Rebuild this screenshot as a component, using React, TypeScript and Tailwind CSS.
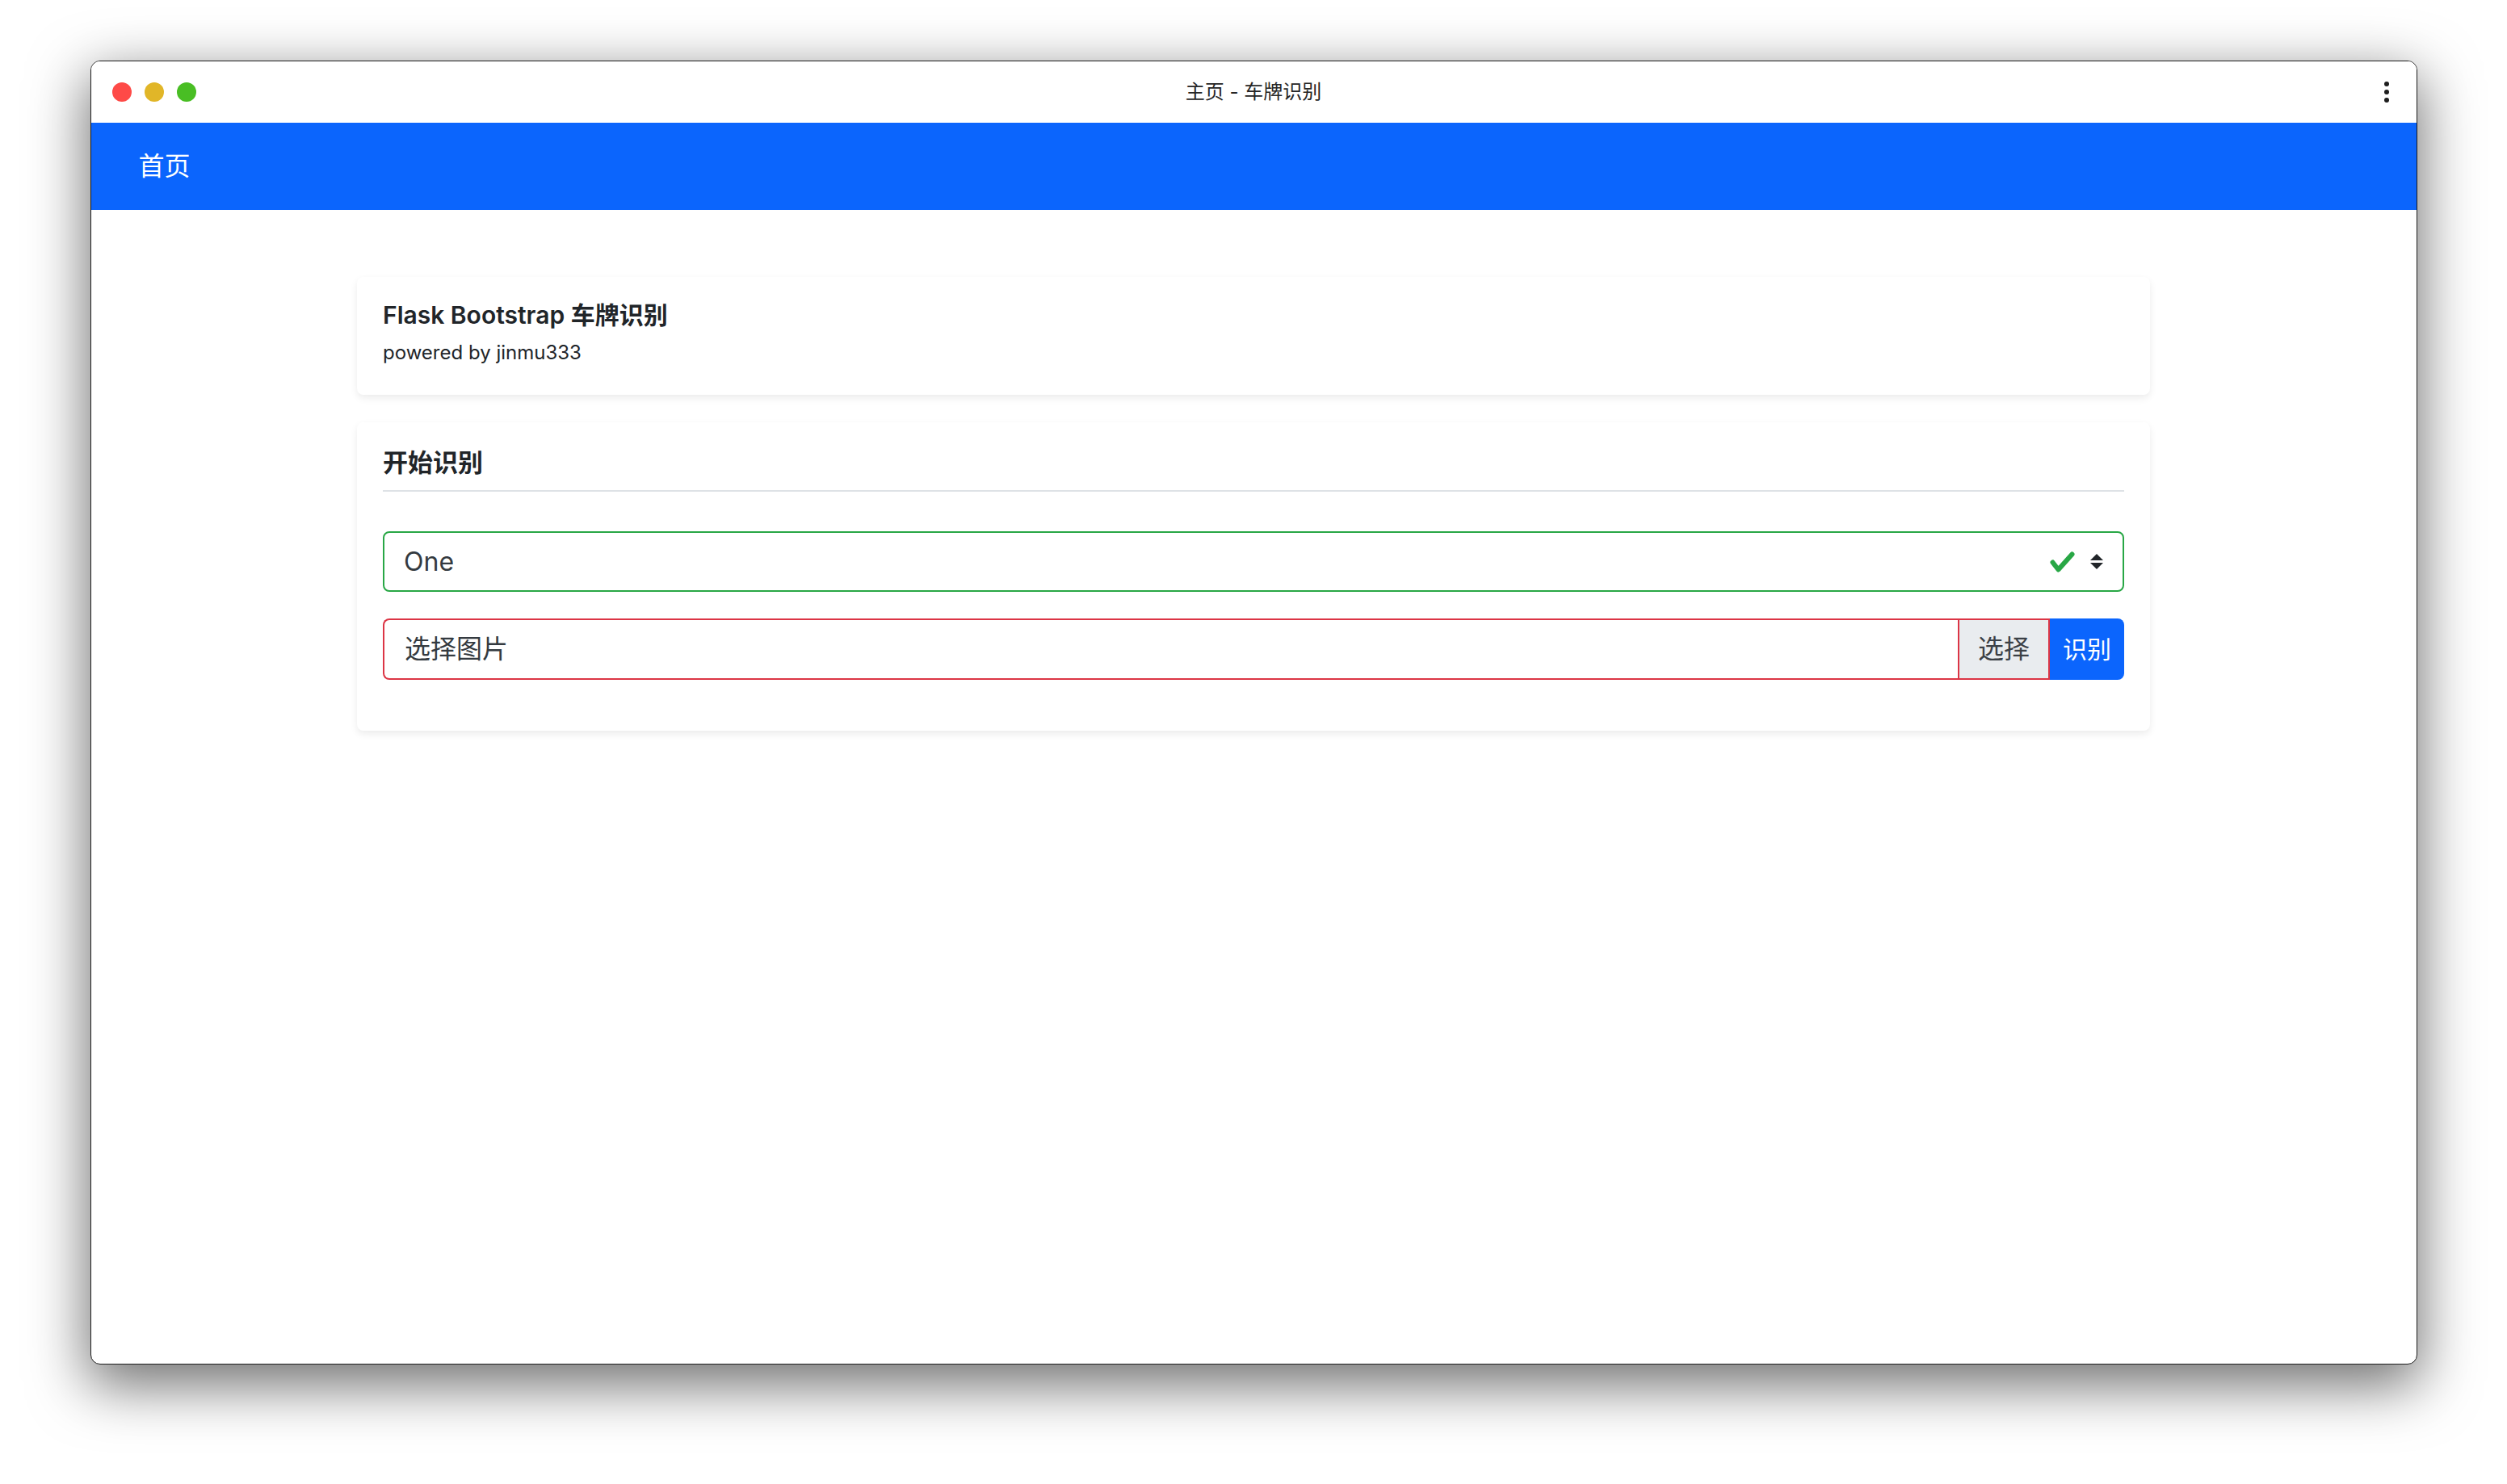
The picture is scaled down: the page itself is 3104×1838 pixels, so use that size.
import React from "react";

const FONT = { fontFamily: 'Inter, "Noto Sans CJK SC", "Noto Sans", sans-serif' };

export default function App() {
  return (
    <div className="w-[3104px] h-[1838px] bg-white flex justify-center pt-[75px]" style={FONT}>
      <div className="w-[2881px] h-[1615px] rounded-[12px] border border-[#1c1c1c] overflow-hidden bg-white shadow-[0_22px_70px_4px_rgba(0,0,0,0.56)] flex flex-col">
        {/* title bar */}
        <div className="h-[76px] shrink-0 grid grid-cols-[1fr_auto_1fr] items-center bg-white">
          <div className="flex items-center gap-[16px] pl-[26px]">
            <span className="w-[24px] h-[24px] rounded-full bg-[#fe4a47]" />
            <span className="w-[24px] h-[24px] rounded-full bg-[#e1b628]" />
            <span className="w-[24px] h-[24px] rounded-full bg-[#49be24]" />
          </div>
          <div className="text-[24px] leading-[30px] text-[#262626]">主页 - 车牌识别</div>
          <div className="flex justify-end pr-[34px]">
            <div className="flex flex-col gap-[4px]">
              <span className="w-[6px] h-[6px] rounded-full bg-[#1e1e1e]" />
              <span className="w-[6px] h-[6px] rounded-full bg-[#1e1e1e]" />
              <span className="w-[6px] h-[6px] rounded-full bg-[#1e1e1e]" />
            </div>
          </div>
        </div>

        {/* navbar */}
        <div className="h-[108px] shrink-0 bg-[#0b65fd] flex items-center pl-[59px]">
          <span className="text-white text-[32px] leading-[40px]">首页</span>
        </div>

        {/* main */}
        <div className="flex-1 flex flex-col items-center gap-[34px] pt-[83px]">
          <div className="w-[2220px] h-[146px] rounded-[8px] bg-white shadow-[0_4px_10px_rgba(0,0,0,0.08)] pl-[32px] pr-[32px] pt-[29px]">
            <div className="text-[30px] leading-[36px] font-semibold text-[#212529]">Flask Bootstrap 车牌识别</div>
            <div className="mt-[11px] text-[24px] leading-[36px] text-[#212529]">powered by jinmu333</div>
          </div>

          <div className="w-[2220px] rounded-[8px] bg-white shadow-[0_4px_10px_rgba(0,0,0,0.08)] px-[32px] pt-[32px] pb-[63px]">
            <div className="pb-[16px] border-b-2 border-[#dee2e6]">
              <div className="text-[31px] leading-[36px] font-semibold text-[#212529]">开始识别</div>
            </div>

            <div className="mt-[49px] h-[75px] border-2 border-[#28a745] rounded-[8px] flex items-center pl-[24px] pr-[24px]">
              <span className="flex-1 text-[32px] leading-[40px] text-[#343a40]">One</span>
              <svg width="31" height="26" viewBox="0 0 31 26" className="mr-[19px]">
                <polyline points="3.5,13.5 10.5,22.5 27.5,3.5" fill="none" stroke="#28a745" strokeWidth="6" strokeLinecap="round" strokeLinejoin="round" />
              </svg>
              <svg width="16" height="19" viewBox="0 0 16 19">
                <polygon points="0,8 8,0 16,8" fill="#212529" />
                <polygon points="0,11 16,11 8,19" fill="#212529" />
              </svg>
            </div>

            <div className="mt-[33px] h-[76px] flex">
              <div className="flex-1 border-2 border-r-0 border-[#dc3545] rounded-l-[8px] flex items-center pl-[25px]">
                <span className="text-[32px] leading-[40px] text-[#343a40]">选择图片</span>
              </div>
              <div className="w-[114px] bg-[#e9ecef] border-2 border-[#dc3545] flex items-center justify-center">
                <span className="text-[32px] leading-[40px] text-[#3b4046]">选择</span>
              </div>
              <div className="w-[92px] bg-[#0b65fd] rounded-r-[8px] flex items-center justify-center">
                <span className="text-[30px] leading-[40px] text-white">识别</span>
              </div>
            </div>
          </div>
        </div>
      </div>
    </div>
  );
}
